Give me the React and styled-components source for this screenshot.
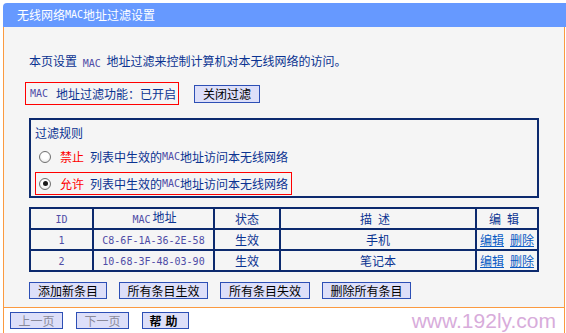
import React from 'react';
import styled, { createGlobalStyle } from 'styled-components';

const NAVY = '#0b3391';
const LINE = '#0c2a6e';
const ORANGE = '#fb9a40';

const Global = createGlobalStyle`
  html, body { margin: 0; padding: 0; background: #fff; }
  body {
    font-family: "Noto Sans CJK SC", "Noto Sans", sans-serif;
    font-size: 12px;
  }
`;

const Page = styled.div`
  padding: 3px 0 0 3px;
  width: 563px;
`;

const Header = styled.div`
  height: 24px;
  background: #6699ff;
  border-top-left-radius: 4px;
  color: #fff;
  display: flex;
  align-items: center;
  padding-left: 14px;
  font-size: 12px;
  line-height: 24px;
`;

const Mono = styled.span`
  font-family: "DejaVu Sans Mono", "Liberation Mono", monospace;
  font-size: 10px;
  vertical-align: -1px;
  margin: 0 ${p => p.$space || 0}px;
  color: ${p => p.$color || '#4f4ca6'};
`;

const Panel = styled.div`
  box-sizing: border-box;
  width: 562px;
  background: #f5f5f5;
  border-left: 1px solid ${ORANGE};
  border-right: 1px solid ${ORANGE};
  border-bottom: 1px solid ${ORANGE};
  padding: 26px 0 8px 25px;
`;

const Intro = styled.div`
  color: ${NAVY};
  line-height: 16px;
  height: 16px;
`;

const StatusRow = styled.div`
  display: flex;
  align-items: center;
  margin: 13px 0 0 -4px;
  gap: 15px;
`;

const StatusBox = styled.div`
  box-sizing: border-box;
  height: 23px;
  border: 1px solid #ff0000;
  padding: 0 2px 0 4px;
  display: flex;
  align-items: center;
  color: ${NAVY};
  line-height: 16px;
  white-space: pre;
`;

const Button = styled.button`
  box-sizing: border-box;
  width: ${p => p.$w}px;
  height: ${p => p.$h || 17}px;
  padding: 0;
  margin: 0;
  background: #dddff9;
  border: 1px solid #2d4fb5;
  color: ${p => (p.disabled ? '#8a8a9a' : '#000')};
  font-family: "Noto Sans CJK SC", sans-serif;
  font-size: 12px;
  font-weight: ${p => (p.$bold ? 700 : 400)};
  line-height: 14px;
  letter-spacing: ${p => p.$ls || 0}px;
  white-space: nowrap;
`;

const RuleBox = styled.div`
  box-sizing: border-box;
  width: 510px;
  margin-top: 13px;
  border: 2px solid ${LINE};
  padding: 5px 0 1px 4px;
  height: 80px;
`;

const RuleTitle = styled.div`
  color: ${NAVY};
  line-height: 16px;
  height: 16px;
`;

const RuleRow = styled.div`
  box-sizing: border-box;
  width: 257px;
  height: 23px;
  margin-top: 4px;
  border: 1px solid ${p => (p.$active ? '#ff0000' : 'transparent')};
  padding-left: 3px;
  display: flex;
  align-items: center;
  color: ${NAVY};
  line-height: 16px;
  white-space: nowrap;
`;

const Radio = styled.span`
  box-sizing: border-box;
  width: 12px;
  height: 12px;
  border-radius: 50%;
  border: 1px solid #707070;
  background: radial-gradient(circle at 50% 40%, #ffffff 40%, #dcdcdc 100%);
  margin-right: 9px;
  display: flex;
  align-items: center;
  justify-content: center;
  flex: none;
  &::after {
    content: '';
    width: 5px;
    height: 5px;
    border-radius: 50%;
    background: ${p => (p.$checked ? '#1a1a1a' : 'transparent')};
  }
`;

const RuleWord = styled.span`
  color: #ff0000;
  margin-right: 6px;
`;

const Table = styled.table`
  margin-top: 9px;
  width: 510px;
  border-collapse: collapse;
  table-layout: fixed;
`;

const Th = styled.th`
  border: 2px solid ${LINE};
  height: 18px;
  padding: 0;
  font-weight: 400;
  color: ${NAVY};
  text-align: center;
  line-height: 16px;
  letter-spacing: ${p => p.$ls || 0}px;
`;

const Td = styled.td`
  border: 2px solid ${LINE};
  height: 18px;
  padding: 0;
  color: ${NAVY};
  text-align: center;
  line-height: 16px;
  white-space: nowrap;
`;

const Link = styled.a`
  color: #0a5bc4;
  text-decoration: underline;
  margin: 0 3px;
  cursor: pointer;
`;

const Actions = styled.div`
  display: flex;
  gap: 12px;
  margin-top: 10px;
`;

const Footer = styled.div`
  box-sizing: border-box;
  width: 562px;
  height: 26px;
  border-left: 1px solid ${ORANGE};
  border-right: 1px solid ${ORANGE};
  border-bottom: 1px solid ${ORANGE};
  padding: 4px 0 0 6px;
  display: flex;
  align-items: flex-start;
  gap: 13px;
`;

const Watermark = styled.span`
  margin: -4px 8px 0 auto;
  font-family: "Liberation Sans", Arial, sans-serif;
  font-size: 21px;
  line-height: 25px;
  color: #d8acdb;
`;

const rows = [
  { id: 1, mac: 'C8-6F-1A-36-2E-58', status: '生效', desc: '手机' },
  { id: 2, mac: '10-68-3F-48-03-90', status: '生效', desc: '笔记本' },
];

export default function App() {
  return (
    <>
      <Global />
      <Page>
        <Header>
          无线网络<Mono $color="#fff">MAC</Mono>地址过滤设置
        </Header>
        <Panel>
          <Intro>
            本页设置 <Mono $space={3}>MAC</Mono> 地址过滤来控制计算机对本无线网络的访问。
          </Intro>
          <StatusRow>
            <StatusBox>
              <Mono>MAC</Mono><Mono $space={1}> </Mono>地址过滤功能：已开启
            </StatusBox>
            <Button $w={66} $h={18}>关闭过滤</Button>
          </StatusRow>
          <RuleBox>
            <RuleTitle>过滤规则</RuleTitle>
            <RuleRow>
              <Radio />
              <RuleWord>禁止</RuleWord>
              列表中生效的<Mono>MAC</Mono>地址访问本无线网络
            </RuleRow>
            <RuleRow $active>
              <Radio $checked />
              <RuleWord>允许</RuleWord>
              列表中生效的<Mono>MAC</Mono>地址访问本无线网络
            </RuleRow>
          </RuleBox>
          <Table>
            <colgroup>
              <col style={{ width: 63 }} />
              <col style={{ width: 121 }} />
              <col style={{ width: 66 }} />
              <col style={{ width: 196 }} />
              <col style={{ width: 62 }} />
            </colgroup>
            <thead>
              <tr>
                <Th><Mono>ID</Mono></Th>
                <Th><Mono $space={2}>MAC</Mono>地址</Th>
                <Th>状态</Th>
                <Th $ls={6}>描述</Th>
                <Th $ls={6}>编辑</Th>
              </tr>
            </thead>
            <tbody>
              {rows.map(r => (
                <tr key={r.id}>
                  <Td><Mono>{r.id}</Mono></Td>
                  <Td><Mono>{r.mac}</Mono></Td>
                  <Td>{r.status}</Td>
                  <Td>{r.desc}</Td>
                  <Td>
                    <Link>编辑</Link>
                    <Link>删除</Link>
                  </Td>
                </tr>
              ))}
            </tbody>
          </Table>
          <Actions>
            <Button $w={78}>添加新条目</Button>
            <Button $w={89}>所有条目生效</Button>
            <Button $w={90}>所有条目失效</Button>
            <Button $w={89}>删除所有条目</Button>
          </Actions>
        </Panel>
        <Footer>
          <Button $w={53} disabled>上一页</Button>
          <Button $w={53} disabled>下一页</Button>
          <Button $w={47} $bold $ls={4}>帮助</Button>
          <Watermark>www.192ly.com</Watermark>
        </Footer>
      </Page>
    </>
  );
}
